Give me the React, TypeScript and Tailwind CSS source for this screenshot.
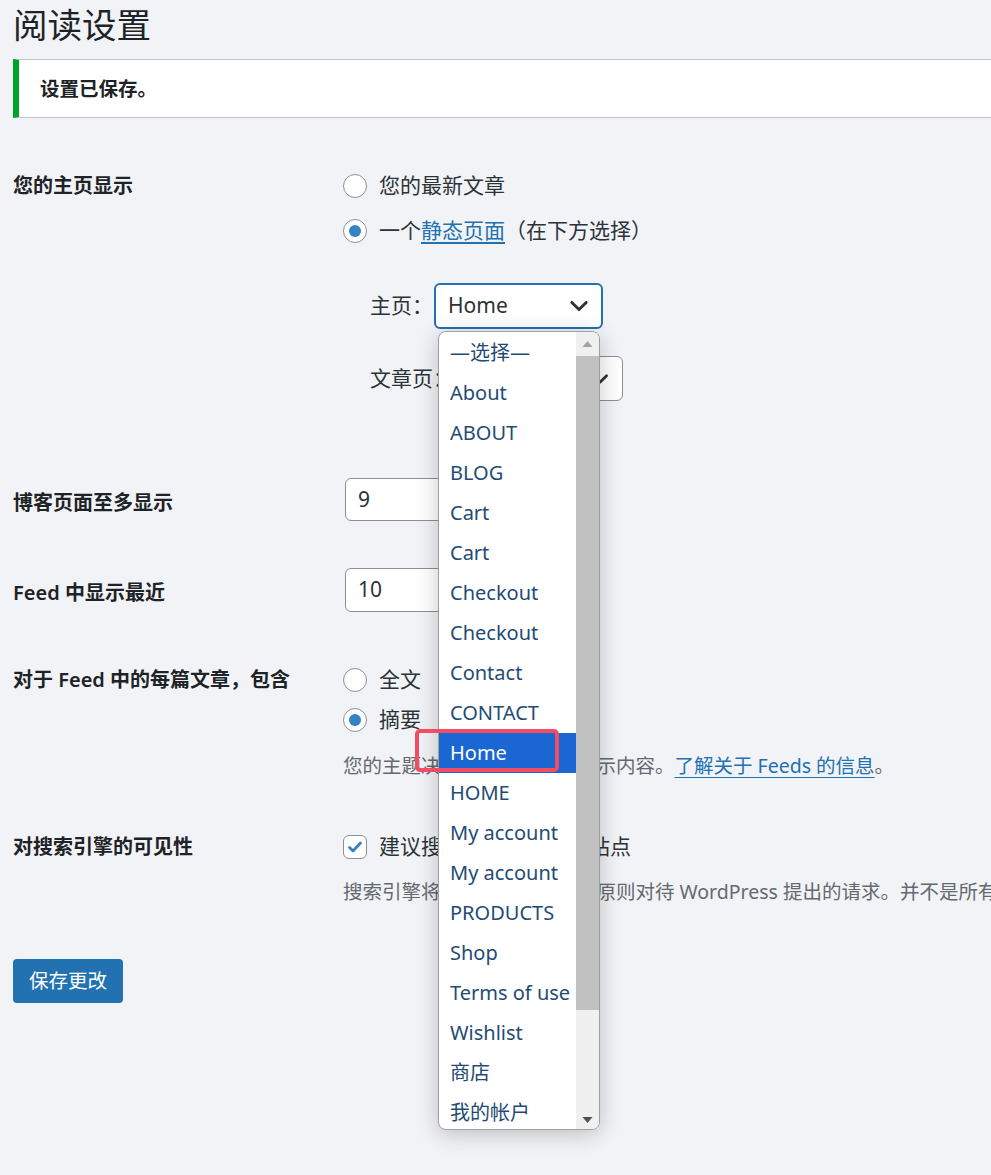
import React from 'react';

const font = { fontFamily: '"Noto Sans", "Noto Sans CJK SC", sans-serif' };

const pages = [
  '—选择—', 'About', 'ABOUT', 'BLOG', 'Cart', 'Cart', 'Checkout', 'Checkout', 'Contact', 'CONTACT',
  'Home', 'HOME', 'My account', 'My account', 'PRODUCTS', 'Shop', 'Terms of use', 'Wishlist', '商店', '我的帐户',
];

const Radio = ({ checked }: { checked?: boolean }) => (
  <span className="w-[24px] h-[24px] rounded-full border border-[#8c8f94] bg-white flex items-center justify-center shrink-0">
    {checked && <span className="w-[12px] h-[12px] rounded-full bg-[#3582c4]" />}
  </span>
);

const Chevron = ({ className }: { className?: string }) => (
  <svg viewBox="0 0 20 20" className={className} fill="none" stroke="#2c3338" strokeWidth="2.4" strokeLinecap="round" strokeLinejoin="round">
    <path d="M4 7l6 6 6-6" />
  </svg>
);

const App: React.FC = () => {
  return (
    <div className="relative min-h-[1175px] bg-[#f1f3f6] text-[#1d2327] overflow-hidden" style={font}>
      <div className="pl-[13px]">
        <h1 className="h-[46px] mt-[2px] flex items-center text-[34.5px] font-normal text-[#1d2327]">阅读设置</h1>

        <div className="mt-[11px] h-[59px] bg-white border-y border-[#c3c4c7] border-l-[6px] border-l-[#00a32a] flex items-center pl-[21px]">
          <p className="text-[19.5px] font-semibold text-[#1d2327]">设置已保存。</p>
        </div>

        {/* 主页显示 */}
        <div className="mt-[45px] flex">
          <div className="w-[330px] shrink-0 h-[46px] flex items-center text-[20px] font-semibold">您的主页显示</div>
          <div className="flex flex-col text-[21px] text-[#2c3338]">
            <label className="h-[46px] flex items-center gap-[12px]">
              <Radio />
              <span>您的最新文章</span>
            </label>
            <label className="h-[44px] flex items-center gap-[12px]">
              <Radio checked />
              <span>一个<a className="text-[#2271b1] underline underline-offset-4">静态页面</a>（在下方选择）</span>
            </label>
            <div className="mt-[30px] ml-[27px] flex items-center h-[46px]">
              <span className="w-[64px]">主页：</span>
              <div className="w-[169px] h-[46px] border-2 border-[#2271b1] rounded-[6px] bg-white flex items-center justify-between pl-[12px] pr-[10px] text-[#2c3338]">
                <span>Home</span>
                <Chevron className="w-[24px] h-[24px]" />
              </div>
            </div>
            <div className="mt-[27px] ml-[27px] flex items-center h-[45px]">
              <span className="w-[85px]">文章页：</span>
              <div className="w-[168px] h-[45px] border border-[#8c8f94] rounded-[6px] bg-white flex items-center justify-end pr-[11px]">
                <Chevron className="w-[22px] h-[22px]" />
              </div>
            </div>
          </div>
        </div>

        {/* 博客页面至多显示 */}
        <div className="mt-[77px] flex items-center">
          <div className="w-[330px] shrink-0 text-[20px] font-semibold pt-[6px]">博客页面至多显示</div>
          <div className="ml-[2px] w-[98px] h-[43px] border border-[#8c8f94] rounded-[6px] bg-white flex items-center pl-[12px] text-[21px] text-[#2c3338]">9</div>
        </div>

        {/* Feed 中显示最近 */}
        <div className="mt-[47px] flex items-center">
          <div className="w-[330px] shrink-0 text-[20px] font-semibold pt-[6px]">Feed 中显示最近</div>
          <div className="ml-[2px] w-[98px] h-[44px] border border-[#8c8f94] rounded-[6px] bg-white flex items-center pl-[12px] text-[21px] text-[#2c3338]">10</div>
        </div>

        {/* 每篇文章包含 */}
        <div className="mt-[48px] flex">
          <div className="w-[330px] shrink-0 h-[40px] flex items-center text-[20px] font-semibold">对于 Feed 中的每篇文章，包含</div>
          <div className="flex flex-col text-[21px] text-[#2c3338]">
            <label className="h-[40px] flex items-center gap-[12px]">
              <Radio />
              <span>全文</span>
            </label>
            <label className="h-[40px] flex items-center gap-[12px]">
              <Radio checked />
              <span>摘要</span>
            </label>
            <p className="mt-[6px] h-[40px] flex items-center text-[19.5px] text-[#646970] whitespace-nowrap">
              您的主题决定了在浏览器中显示内容。<a className="text-[#2271b1] underline underline-offset-4">了解关于 Feeds 的信息</a>。
            </p>
          </div>
        </div>

        {/* 搜索引擎可见性 */}
        <div className="mt-[41px] flex">
          <div className="w-[330px] shrink-0 h-[40px] flex items-center text-[20px] font-semibold">对搜索引擎的可见性</div>
          <div className="flex flex-col text-[21px] text-[#2c3338]">
            <label className="h-[40px] flex items-center gap-[12px]">
              <span className="w-[24px] h-[24px] shrink-0 rounded-[6px] border border-[#8c8f94] bg-white flex items-center justify-center">
                <svg viewBox="0 0 20 20" className="w-[20px] h-[20px]" fill="none" stroke="#3582c4" strokeWidth="2.8" strokeLinecap="round" strokeLinejoin="round">
                  <path d="M4.5 10.5l3.5 3.5 7.5-8" />
                </svg>
              </span>
              <span className="whitespace-nowrap">建议搜索引擎不索引本站点</span>
            </label>
            <p className="mt-[5px] h-[40px] flex items-center text-[19.5px] text-[#646970] whitespace-nowrap">
              搜索引擎将会本着自觉自愿的原则对待 WordPress 提出的请求。并不是所有搜索引擎都会遵守这类请求。
            </p>
          </div>
        </div>

        <button className="mt-[47px] w-[110px] h-[44px] bg-[#2271b1] text-white text-[19.5px] rounded-[4px]">保存更改</button>
      </div>

      {/* open select dropdown */}
      <div className="absolute left-[438px] top-[331px] w-[162px] h-[799px] bg-white border border-[#a0a0a0] rounded-[8px] overflow-hidden flex shadow-[0_4px_22px_rgba(0,0,0,0.22)]">
        <ul className="w-[137px] shrink-0 pt-[1px] text-[20px] text-[#1f4b74] whitespace-nowrap">
          {pages.map((p, i) => (
            <li key={i} className={`h-[40px] flex items-center pl-[11px] ${p === 'Home' ? 'bg-[#1a66d2] text-white' : ''}`}>{p}</li>
          ))}
        </ul>
        <div className="w-[23px] bg-[#f0f0f0] flex flex-col">
          <div className="h-[24px] flex items-center justify-center">
            <svg viewBox="0 0 10 6" className="w-[11px] h-[6px]"><path d="M0 6L5 0l5 6z" fill="#a3a3a3" /></svg>
          </div>
          <div className="h-[654px] bg-[#c1c1c1]" />
          <div className="flex-1 flex items-end justify-center pb-[6px]">
            <svg viewBox="0 0 10 6" className="w-[11px] h-[6px]"><path d="M0 0l5 6 5-6z" fill="#505050" /></svg>
          </div>
        </div>
      </div>

      {/* annotation box */}
      <div className="absolute left-[415px] top-[729px] w-[144px] h-[43px] border-[4px] border-[#f24d64] rounded-[5px]" />
    </div>
  );
};

export default App;
